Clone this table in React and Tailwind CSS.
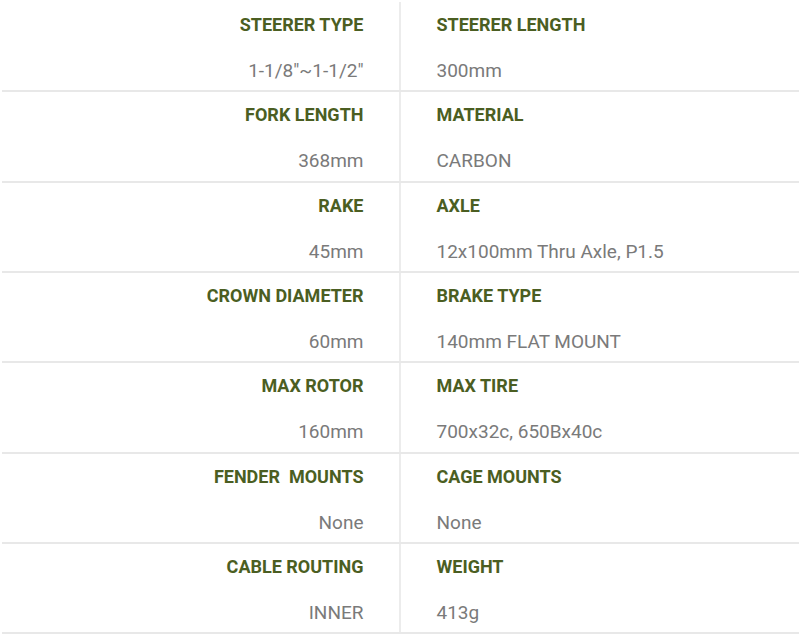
import React from "react";

const rows = [
  ["STEERER TYPE", "1-1/8\"~1-1/2\"", "STEERER LENGTH", "300mm"],
  ["FORK LENGTH", "368mm", "MATERIAL", "CARBON"],
  ["RAKE", "45mm", "AXLE", "12x100mm Thru Axle, P1.5"],
  ["CROWN DIAMETER", "60mm", "BRAKE TYPE", "140mm FLAT MOUNT"],
  ["MAX ROTOR", "160mm", "MAX TIRE", "700x32c, 650Bx40c"],
  ["FENDER\u00a0 MOUNTS", "None", "CAGE MOUNTS", "None"],
  ["CABLE ROUTING", "INNER", "WEIGHT", "413g"],
];

function Cell({ title, value, left }) {
  return (
    <div
      className={
        "flex flex-col pt-[12px] " +
        (left ? "items-end pr-[35px] border-r-2 border-[#ececec]" : "items-start pl-[36px]")
      }
    >
      <div className="text-[18px] leading-[22px] font-bold text-[#4b5e22]">{title}</div>
      <div className="mt-[24px] text-[19px] leading-[22px] text-[#7a7a7a]">{value}</div>
    </div>
  );
}

export default function App() {
  return (
    <div
      className="w-[800px] h-[637px] bg-white pt-[2px] pl-[2px] pr-[1px]"
      style={{ fontFamily: "Roboto, 'Liberation Sans', sans-serif" }}
    >
      {rows.map((r, i) => (
        <div key={i} className="grid grid-cols-2 h-[90.33px] border-b-2 border-[#e8e8e8]">
          <Cell title={r[0]} value={r[1]} left />
          <Cell title={r[2]} value={r[3]} />
        </div>
      ))}
    </div>
  );
}
